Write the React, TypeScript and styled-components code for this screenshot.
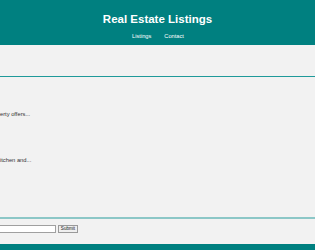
import styled, { createGlobalStyle } from "styled-components";

const GlobalStyle = createGlobalStyle`
  html, body {
    margin: 0;
    padding: 0;
    background: #f2f2f2;
    font-family: "Liberation Sans", Arial, sans-serif;
    overflow: hidden;
  }
`;

const listings = [
  { id: 1, text: "This property offers..." },
  { id: 2, text: "Modern kitchen and..." },
];

const App = () => {
  return (
    <>
      <GlobalStyle />
      <Header>
        <Title>Real Estate Listings</Title>
        <Nav>
          <NavLink>Listings</NavLink>
          <NavLink>Contact</NavLink>
        </Nav>
      </Header>
      <Banner />
      <ListingSection>
        {listings.map((item) => (
          <Listing key={item.id}>
            <Description>{item.text}</Description>
          </Listing>
        ))}
      </ListingSection>
      <ContactForm>
        <TextInput type="text" />
        <SubmitButton type="button">Submit</SubmitButton>
      </ContactForm>
      <Footer />
    </>
  );
};

const Header = styled.header`
  height: 45px;
  background: #008080;
  color: #ffffff;
  display: flex;
  flex-direction: column;
  align-items: center;
  box-sizing: border-box;
  padding-top: 12px;
`;

const Title = styled.h1`
  margin: 0;
  font-size: 11.5px;
  line-height: 14px;
  font-weight: bold;
`;

const Nav = styled.nav`
  display: flex;
  column-gap: 13px;
  margin-top: 6px;
  margin-left: 1px;
`;

const NavLink = styled.span`
  font-size: 5.7px;
  line-height: 8px;
  color: #ffffff;
`;

const Banner = styled.section`
  height: 31px;
  border-bottom: 1px solid #1f9a9a;
`;

const ListingSection = styled.section`
  height: 142px;
  box-sizing: border-box;
  padding-top: 33px;
  margin-left: -24px;
  border-bottom: 2px solid #8cc7c7;
`;

const Listing = styled.article`
  height: 46px;
`;

const Description = styled.p`
  margin: 0;
  font-size: 5.75px;
  line-height: 8px;
  color: #333333;
`;

const ContactForm = styled.form`
  height: 25px;
  display: flex;
  align-items: flex-start;
  column-gap: 2px;
  margin-left: -24px;
  padding-top: 6px;
  box-sizing: border-box;
`;

const TextInput = styled.input`
  width: 80px;
  height: 8px;
  box-sizing: border-box;
  border: 1px solid #a0a0a0;
  background: #ffffff;
  padding: 0;
  margin: 0;
`;

const SubmitButton = styled.button`
  width: 20px;
  height: 8px;
  box-sizing: border-box;
  border: 1px solid #9a9a9a;
  background: #efefef;
  font-family: "Liberation Sans", Arial, sans-serif;
  font-size: 4.6px;
  line-height: 6px;
  color: #222222;
  padding: 0;
  margin: 0;
`;

const Footer = styled.footer`
  height: 10px;
  background: #008080;
`;

export default App;
